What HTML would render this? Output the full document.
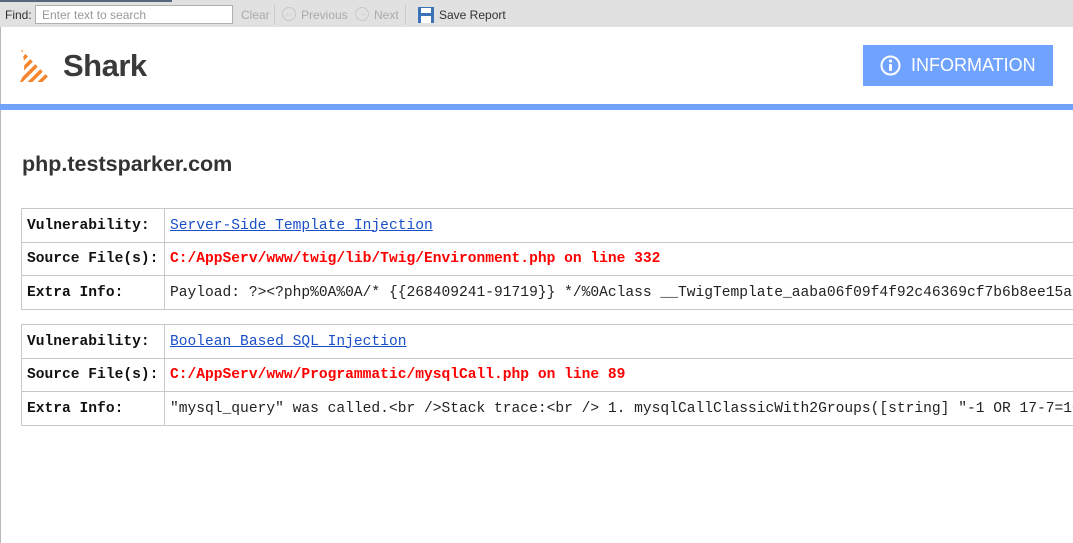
<!DOCTYPE html>
<html><head><meta charset="utf-8"><style>
html,body{margin:0;padding:0;width:1073px;height:543px;overflow:hidden;background:#fff;font-family:"Liberation Sans",sans-serif;position:relative}
.tb{position:absolute;left:0;top:0;width:1073px;height:27px;background:#e1e1e1;font-size:12px;color:#333}
.tb .dark{position:absolute;left:0;top:0;width:172px;height:2px;background:#56687e}
.tb span{position:absolute;top:8px}
.inp{position:absolute;left:35px;top:5px;width:198px;height:19px;border:1px solid #b0b0b0;background:#fff;color:#999;font-size:12px;line-height:19px;padding-left:6px;box-sizing:border-box}
.sep{position:absolute;top:4px;width:1px;height:21px;background:#ccc}
.circ{position:absolute;top:7px;width:14px;height:14px;border:1px solid #c8c8c8;border-radius:50%;box-sizing:border-box;font-size:10px;line-height:12px;text-align:center;color:#c8c8c8}
.leftline{position:absolute;left:0;top:27px;width:1px;height:516px;background:#b8b8b8}
.logo{position:absolute;left:63px;top:48px;font-size:31px;font-weight:bold;color:#3a3a3a;letter-spacing:-0.5px}
.info{position:absolute;left:863px;top:45px;width:190px;height:41px;background:#6fa3ff;color:#fff;font-size:18px;line-height:41px}
.bar{position:absolute;left:0;top:104px;width:1073px;height:6px;background:#6fa3ff}
h1{position:absolute;left:22px;top:152px;margin:0;font-size:21.5px;font-weight:bold;color:#333}
table{position:absolute;left:21px;border-collapse:collapse;width:1300px;font-family:"Liberation Mono",monospace;font-size:14.6px}
td{border:1px solid #c8c8c8;height:31.5px;padding:1px 5px 0;white-space:nowrap;color:#222}
td.l{width:132px;font-weight:bold;color:#111}
a{color:#1a4fc8}
.red{color:#f00;font-weight:bold}
</style></head><body>
<div class="tb"><div class="dark"></div>
<span style="left:5px">Find:</span>
<div class="inp">Enter text to search</div>
<span style="left:241px;color:#aaa">Clear</span>
<div class="sep" style="left:274px"></div>
<div class="circ" style="left:282px">&#8592;</div>
<span style="left:301px;color:#aaa">Previous</span>
<div class="circ" style="left:355px">&#8594;</div>
<span style="left:374px;color:#aaa">Next</span>
<div class="sep" style="left:405px"></div>
<svg style="position:absolute;left:418px;top:7px" width="16" height="16" viewBox="0 0 16 16"><rect x="0" y="0" width="16" height="16" fill="#3a73b8"/><rect x="3" y="1" width="10" height="5" fill="#fff"/><rect x="3" y="9" width="10" height="7" fill="#fff"/></svg>
<span style="left:439px">Save Report</span>
</div>
<div class="leftline"></div>
<svg style="position:absolute;left:18px;top:48px" width="38" height="36" viewBox="0 0 38 36">
<defs><clipPath id="c"><path d="M3 1 Q10 20 2 34 L36 34 Q20 20 3 1 Z"/></clipPath></defs>
<g clip-path="url(#c)" stroke="#f7852d" stroke-width="3.5" fill="none">
<path d="M-6 12 L12 -6"/><path d="M-6 22 L18 -2"/><path d="M-4 30 L22 4"/><path d="M2 34 L28 8"/><path d="M10 36 L34 12"/><path d="M18 38 L40 16"/>
</g></svg>
<div class="logo">Shark</div>
<div class="info"><svg style="position:absolute;left:17px;top:10px" width="21" height="21" viewBox="0 0 21 21"><circle cx="10.5" cy="10.5" r="9" fill="none" stroke="#fff" stroke-width="2"/><circle cx="10.5" cy="6" r="1.6" fill="#fff"/><rect x="9" y="9" width="3" height="7" rx="1" fill="#fff"/></svg><span style="position:absolute;left:48px">INFORMATION</span></div>
<div class="bar"></div>
<h1>php.testsparker.com</h1>
<table style="top:208px">
<tr><td class="l">Vulnerability:</td><td><a href="#">Server-Side Template Injection</a></td></tr>
<tr><td class="l">Source File(s):</td><td class="red">C:/AppServ/www/twig/lib/Twig/Environment.php on line 332</td></tr>
<tr><td class="l">Extra Info:</td><td>Payload: ?&gt;&lt;?php%0A%0A/* {{268409241-91719}} */%0Aclass __TwigTemplate_aaba06f09f4f92c46369cf7b6b8ee15a</td></tr>
</table>
<table style="top:324px">
<tr><td class="l">Vulnerability:</td><td><a href="#">Boolean Based SQL Injection</a></td></tr>
<tr><td class="l">Source File(s):</td><td class="red">C:/AppServ/www/Programmatic/mysqlCall.php on line 89</td></tr>
<tr><td class="l">Extra Info:</td><td>"mysql_query" was called.&lt;br /&gt;Stack trace:&lt;br /&gt; 1. mysqlCallClassicWith2Groups([string] "-1 OR 17-7=10</td></tr>
</table>
</body></html>
